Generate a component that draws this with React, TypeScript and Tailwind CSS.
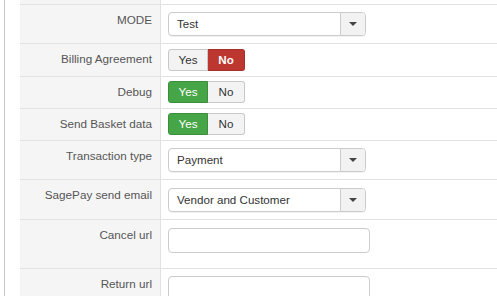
import type { ReactNode } from "react";

const FONT = "font-['Liberation_Sans',Arial,sans-serif]";

function Row({
  label,
  h,
  pt,
  children,
  first,
}: {
  label?: string;
  h: string;
  pt: string;
  children?: ReactNode;
  first?: boolean;
}) {
  return (
    <div className={`flex shrink-0 ${h} ${first ? "" : "border-t border-[#e2e2e2]"}`}>
      <div className="w-[141px] shrink-0 border-r border-[#e2e2e2] bg-[#f5f5f5] pr-[8px] pt-[7px] text-right text-[11.7px] leading-[16px] text-[#555]">
        {label}
      </div>
      <div className={`flex-1 pl-[7px] ${pt}`}>{children}</div>
    </div>
  );
}

function Select({ value }: { value: string }) {
  return (
    <div className="flex h-[24px] w-[198px] rounded-[4px] border border-[#ccc] bg-white shadow-[0_1px_1px_rgba(0,0,0,0.06)]">
      <div className="flex flex-1 items-center pl-[8px] text-[11.6px] text-[#333]">{value}</div>
      <div className="flex w-[25px] items-center justify-center rounded-r-[3px] border-l border-[#ccc] bg-[#f2f2f2]">
        <span className="h-0 w-0 border-x-[4px] border-t-[4px] border-x-transparent border-t-[#444]" />
      </div>
    </div>
  );
}

function Toggle({ on }: { on: boolean }) {
  return (
    <div className="flex h-[22px] w-[77px] text-[11.6px]">
      <div
        className={
          on
            ? "flex w-[40px] items-center justify-center rounded-l-[3px] border border-[#3b8f3b] bg-[#46a546] text-white"
            : "flex w-[40px] items-center justify-center rounded-l-[3px] border border-[#c8c8c8] bg-[#f3f3f3] text-[#333]"
        }
      >
        Yes
      </div>
      <div
        className={
          on
            ? "flex flex-1 items-center justify-center rounded-r-[3px] border border-l-0 border-[#c8c8c8] bg-[#f3f3f3] text-[#333]"
            : "flex flex-1 items-center justify-center rounded-r-[3px] border border-l-0 border-[#a52f29] bg-[#bd362f] font-bold text-white"
        }
      >
        No
      </div>
    </div>
  );
}

function TextInput() {
  return <div className="h-[25px] w-[202px] rounded-[4px] border border-[#ccc] bg-white" />;
}

export default function App() {
  return (
    <div className={`flex h-[296px] w-[497px] overflow-hidden bg-white ${FONT}`}>
      <div className="w-[4px] shrink-0" />
      <div className="w-px shrink-0 bg-[#c6c6c6]" />
      <div className="w-[15px] shrink-0" />
      <div className="flex flex-1 flex-col">
        <Row first h="h-[4px]" pt="" />
        <Row label="MODE" h="h-[39px]" pt="pt-[7px]">
          <Select value="Test" />
        </Row>
        <Row label="Billing Agreement" h="h-[33px]" pt="pt-[5px]">
          <Toggle on={false} />
        </Row>
        <Row label="Debug" h="h-[32px]" pt="pt-[4px]">
          <Toggle on />
        </Row>
        <Row label="Send Basket data" h="h-[32px]" pt="pt-[4px]">
          <Toggle on />
        </Row>
        <Row label="Transaction type" h="h-[39px]" pt="pt-[7px]">
          <Select value="Payment" />
        </Row>
        <Row label="SagePay send email" h="h-[40px]" pt="pt-[8px]">
          <Select value="Vendor and Customer" />
        </Row>
        <Row label="Cancel url" h="h-[49px]" pt="pt-[8px]">
          <TextInput />
        </Row>
        <Row label="Return url" h="h-[49px]" pt="pt-[7px]">
          <TextInput />
        </Row>
      </div>
    </div>
  );
}
